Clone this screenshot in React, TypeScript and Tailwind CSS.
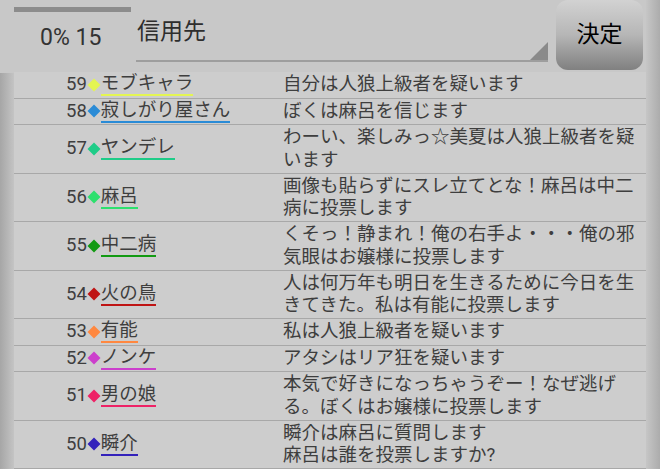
import React from 'react'

type Row = { no: number; name: string; color: string; msg: string }

const rows: Row[] = [
  { no: 59, name: 'モブキャラ', color: '#e4f552', msg: '自分は人狼上級者を疑います' },
  { no: 58, name: '寂しがり屋さん', color: '#2a8bd6', msg: 'ぼくは麻呂を信じます' },
  { no: 57, name: 'ヤンデレ', color: '#1fcc88', msg: 'わーい、楽しみっ☆美夏は人狼上級者を疑います' },
  { no: 56, name: '麻呂', color: '#2ee06e', msg: '画像も貼らずにスレ立てとな！麻呂は中二病に投票します' },
  { no: 55, name: '中二病', color: '#129a12', msg: 'くそっ！静まれ！俺の右手よ・・・俺の邪気眼はお嬢様に投票します' },
  { no: 54, name: '火の鳥', color: '#bf1414', msg: '人は何万年も明日を生きるために今日を生きてきた。私は有能に投票します' },
  { no: 53, name: '有能', color: '#ff8840', msg: '私は人狼上級者を疑います' },
  { no: 52, name: 'ノンケ', color: '#cc3fcc', msg: 'アタシはリア狂を疑います' },
  { no: 51, name: '男の娘', color: '#ee2266', msg: '本気で好きになっちゃうぞー！なぜ逃げる。ぼくはお嬢様に投票します' },
  { no: 50, name: '瞬介', color: '#3322bb', msg: '瞬介は麻呂に質問します\n麻呂は誰を投票しますか?' },
]

export default function App() {
  return (
    <div
      className="w-[660px] h-[469px] flex bg-[#c8c8c8] overflow-hidden text-[#3e3e3e]"
      style={{ fontFamily: "Roboto, 'Noto Sans CJK JP', sans-serif" }}
    >
      <div className="w-[14px] flex flex-col">
        <div className="h-[73px] bg-[#c8c8c8]" />
        <div className="flex-1 bg-gradient-to-r from-[#a6a6a6] to-[#c4c4c4]" />
      </div>

      <div className="flex-1 flex flex-col">
        <div className="h-[73px] flex">
          <div className="w-[117px] flex flex-col">
            <div className="mt-[7px] h-[5px] bg-[#8c8c8c]" />
            <div className="pl-[26px] pt-[12px] text-[23px] leading-[28px] text-[#333]">0% 15</div>
          </div>
          <div className="ml-[5px] w-[412px] h-[62px] relative border-b-2 border-[#9e9e9e]">
            <div className="pt-[17px] pl-[1px] text-[23px] leading-[30px] text-[#2e2e2e]">信用先</div>
            <svg className="absolute right-0 bottom-0" width="18" height="18" viewBox="0 0 18 18">
              <polygon points="18,0 18,18 0,18" fill="#8a8a8a" />
            </svg>
          </div>
          <button className="ml-[8px] w-[87px] h-[70px] rounded-[12px] bg-gradient-to-b from-[#d2d2d2] via-[#b6b6b6] to-[#808080] text-[23px] text-black flex items-center justify-center">
            決定
          </button>
        </div>

        <div className="flex-1 bg-[#cdcdcd]">
          {rows.map((r) => (
            <div key={r.no} className="flex border-b border-[#a8a8a8] pt-[1px] pb-[1.5px]">
              <div className="w-[269px] shrink-0 pl-[52px] flex items-center text-[18.5px] leading-[22.5px]">
                <span>{r.no}</span>
                <svg width="14" height="14" viewBox="0 0 14 14" className="shrink-0">
                  <polygon points="7,0.5 13.5,7 7,13.5 0.5,7" fill={r.color} />
                </svg>
                <span className="inline-block leading-[21px] border-b-2" style={{ borderColor: r.color }}>
                  {r.name}
                </span>
              </div>
              <div className="w-[358px] text-[18.5px] leading-[22.5px] whitespace-pre-line">{r.msg}</div>
            </div>
          ))}
        </div>
      </div>

      <div className="w-[14px] flex flex-col">
        <div className="flex-1 bg-gradient-to-r from-[#c6c6c6] to-[#acacac]" />
      </div>
    </div>
  )
}
